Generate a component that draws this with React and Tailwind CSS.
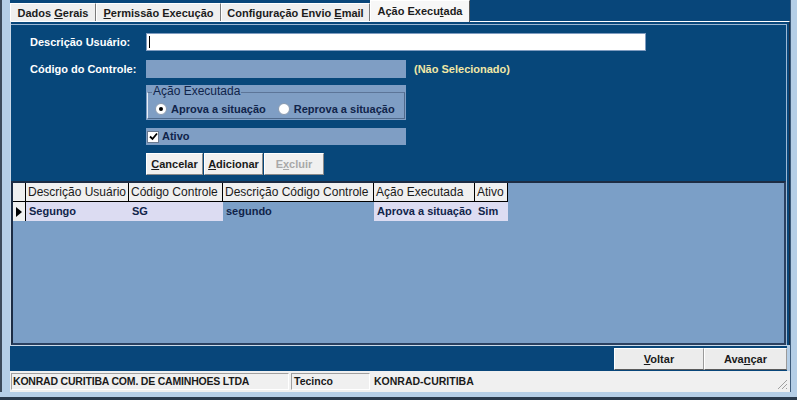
import React from "react";

const U = ({ children }) => <span className="underline">{children}</span>;

const Tab = ({ children, active, w }) => (
  <div
    className={
      active
        ? `${w} h-[22px] bg-[#f7f7f7] border border-b-0 border-t-white border-l-white border-r-[#5a5a5a] flex items-center justify-center text-[#1c1c1c] relative z-10`
        : `${w} h-[19px] mt-[3px] bg-[#efefef] border border-t-white border-l-white border-r-[#7a7a7a] border-b-0 flex items-center justify-center text-[#1c1c1c]`
    }
  >
    <span className="whitespace-pre">{children}</span>
  </div>
);

const Btn = ({ children, w, disabled }) => (
  <div
    className={`${w} h-[22px] bg-[#f0f0f0] border border-t-white border-l-white border-r-[#8a8a8a] border-b-[#8a8a8a] flex items-center justify-center ${
      disabled ? "text-[#a8a8a8]" : "text-[#1a1a1a]"
    }`}
  >
    <span>{children}</span>
  </div>
);

const Radio = ({ checked, label }) => (
  <div className="flex items-center gap-[4px]">
    <div className="w-[12px] h-[12px] rounded-full bg-white border border-[#8a9bb0] flex items-center justify-center">
      {checked && <div className="w-[4px] h-[4px] rounded-full bg-black" />}
    </div>
    <span>{label}</span>
  </div>
);

const cols = [
  { t: "Descrição Usuário", w: "w-[103px]" },
  { t: "Código Controle", w: "w-[94px]" },
  { t: "Descrição Código Controle", w: "w-[151px]" },
  { t: "Ação Executada", w: "w-[101px]" },
  { t: "Ativo", w: "w-[33px]" },
];

const row = ["Segungo", "SG", "segundo", "Aprova a situação", "Sim"];

export default function App() {
  return (
    <div className="w-[797px] h-[400px] bg-[#b5cee6] flex flex-col overflow-hidden font-['Liberation_Sans',Arial,sans-serif] text-[11px] font-bold">
      <div className="flex flex-1">
        {/* left frame */}
        <div className="w-[10px] border-l-2 border-l-[#3c4a5a] bg-[#b5cee6]" />

        <div className="flex-1 flex flex-col">
          {/* tabs */}
          <div className="h-[21px] flex bg-[#08467a] shrink-0">
            <Tab w="w-[86px]">
              Dados <U>G</U>erais
            </Tab>
            <Tab w="w-[125px]">
              <U>P</U>ermissão Execução
            </Tab>
            <Tab w="w-[149px]">
              Configuração Envio <U>E</U>mail
            </Tab>
            <Tab w="w-[100px]" active>
              Ação Execu<U>t</U>ada
            </Tab>
          </div>

          {/* tab page */}
          <div className="h-[324px] border-t border-l border-t-white border-l-[#c8d8e8] border-r border-r-[#1c2c40] bg-[#08467a] pt-[2px] pr-[2px] flex flex-col">
            <div className="flex-1 flex flex-col border-t border-r border-t-[#9db8d4] border-r-[#9db8d4]">
              {/* form */}
              <div className="h-[156px] bg-[#07477a] pl-[19px] pt-[8px] text-white flex flex-col">
                <div className="flex items-center h-[18px]">
                  <span className="w-[116px]">Descrição Usuário:</span>
                  <div className="w-[500px] h-[18px] bg-white border border-[#7f9cc0] flex items-center pl-[2px]">
                    <div className="w-px h-[12px] bg-black" />
                  </div>
                </div>
                <div className="flex items-center h-[18px] mt-[9px]">
                  <span className="w-[116px]">Código do Controle:</span>
                  <div className="w-[260px] h-[18px] bg-[#7f9ec4]" />
                  <span className="ml-[8px] text-[#f1e8a6]">(Não Selecionado)</span>
                </div>
                <div className="ml-[116px] mt-[7px] w-[260px] h-[35px] bg-[#7f9ec4] relative text-[#10244a] flex items-end pb-[3px] pl-[9px] gap-[12px]">
                  <div className="absolute left-[1px] right-[1px] top-[7px] bottom-[1px] border border-t-[#5c7598] border-l-[#e8eef6] border-r-[#506a8c] border-b-[#506a8c]" />
                  <span className="absolute left-[6px] top-[0px] bg-[#7f9ec4] px-[1px] font-normal text-[12px] leading-[13px]">
                    Ação Executada
                  </span>
                  <div className="relative">
                    <Radio checked label="Aprova a situação" />
                  </div>
                  <div className="relative">
                    <Radio label="Reprova a situação" />
                  </div>
                </div>
                <div className="ml-[116px] mt-[8px] w-[260px] h-[17px] bg-[#7f9ec4] flex items-center pl-[1px] gap-[3px] text-[#10244a]">
                  <div className="w-[12px] h-[12px] bg-white border border-[#6a7a90] flex items-center justify-center">
                    <svg width="9" height="9" viewBox="0 0 9 9">
                      <path d="M1 4.5 L3.5 7 L8 1.5" stroke="black" strokeWidth="1.8" fill="none" />
                    </svg>
                  </div>
                  <span>Ativo</span>
                </div>
                <div className="ml-[116px] mt-[8px] flex gap-[1px]">
                  <Btn w="w-[57px]">
                    <U>C</U>ancelar
                  </Btn>
                  <Btn w="w-[59px]">
                    <U>A</U>dicionar
                  </Btn>
                  <Btn w="w-[60px]" disabled>
                    E<U>x</U>cluir
                  </Btn>
                </div>
              </div>

              {/* grid */}
              <div className="flex-1 bg-[#7b9fc7] border-2 border-t-[#1c2c44] border-l-[#1c2c44] border-r-[#2a4060] border-b-[#2a4060]">
                <div className="flex h-[19px]">
                  <div className="w-[13px] bg-[#f0f0f0] border-r border-b border-black" />
                  {cols.map((c) => (
                    <div
                      key={c.t}
                      className={`${c.w} bg-[#f0f0f0] border-r border-b border-black flex items-center pl-[2px] font-normal text-[12px] text-[#1a1a1a] whitespace-nowrap overflow-hidden`}
                    >
                      {c.t}
                    </div>
                  ))}
                </div>
                <div className="flex h-[19px]">
                  <div className="w-[13px] bg-[#f0f0f0] border-r border-black flex items-center justify-center">
                    <svg width="6" height="10" viewBox="0 0 6 10">
                      <path d="M0 0 L6 5 L0 10 Z" fill="black" />
                    </svg>
                  </div>
                  {cols.map((c, i) => (
                    <div
                      key={c.t}
                      className={`${c.w} ${
                        i === 2 ? "bg-[#7b9fc7]" : "bg-[#dcdcf2]"
                      } flex items-center pl-[3px] text-[#10244a] whitespace-nowrap overflow-hidden`}
                    >
                      {row[i]}
                    </div>
                  ))}
                </div>
              </div>
            </div>
          </div>

          {/* bottom buttons */}
          <div className="h-[26px] bg-[#08467a] mr-[3px] flex justify-end items-end pb-[1px] border-t border-t-[#c8d8e8]">
            <div className="w-[90px] h-[22px] bg-[#ececec] border border-t-white border-l-white border-r-[#9a9a9a] border-b-[#5a5a5a] flex items-center justify-center text-[#1a1a1a]">
              <span>
                <U>V</U>oltar
              </span>
            </div>
            <div className="w-[83px] h-[22px] bg-[#ececec] border border-t-white border-l-white border-r-[#9a9a9a] border-b-[#5a5a5a] flex items-center justify-center text-[#1a1a1a]">
              <span>
                Ava<U>n</U>çar
              </span>
            </div>
          </div>

          {/* status bar */}
          <div className="h-[21px] bg-[#f0f0f0] flex items-center gap-[2px] px-[1px] text-[#1a1a1a] text-[10.5px] relative">
            <div className="w-[278px] h-[17px] border border-t-[#a0a0a0] border-l-[#a0a0a0] border-r-white border-b-white flex items-center pl-[1px] tracking-[-0.2px]">
              KONRAD CURITIBA COM. DE CAMINHOES LTDA
            </div>
            <div className="w-[79px] h-[17px] border border-t-[#a0a0a0] border-l-[#a0a0a0] border-r-white border-b-white flex items-center pl-[2px]">
              Tecinco
            </div>
            <div className="flex-1 h-[17px] flex items-center pl-[2px]">KONRAD-CURITIBA</div>
            <svg className="absolute right-[2px] bottom-[2px]" width="12" height="12" viewBox="0 0 12 12">
              <path d="M11 2 L2 11 M11 6 L6 11 M11 10 L10 11" stroke="#a0a0a0" strokeWidth="1" />
            </svg>
          </div>
        </div>

        {/* right frame */}
        <div className="w-[7px] bg-[#b5cee6] border-l border-l-[#3c5a7a]" />
      </div>
      <div className="h-[8px] bg-[#b5cee6] border-b-[3px] border-b-[#2a3a4c] shrink-0" />
    </div>
  );
}
